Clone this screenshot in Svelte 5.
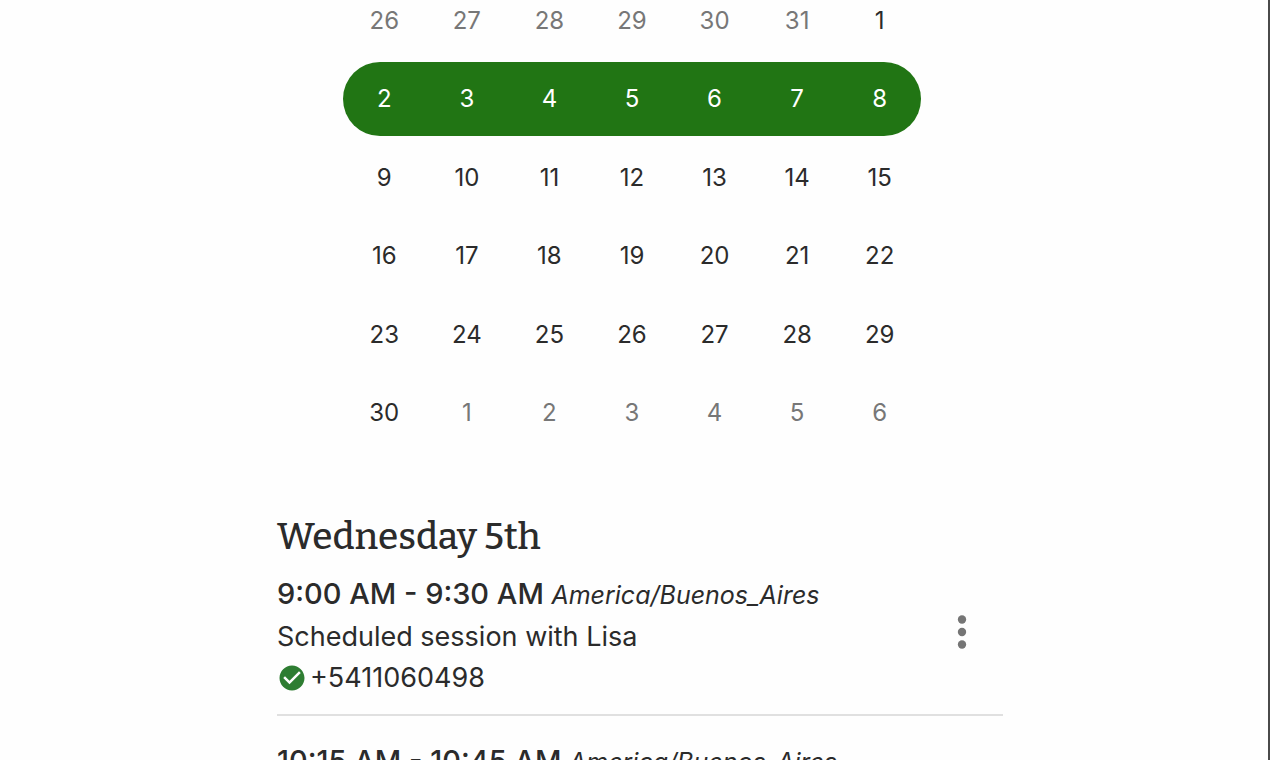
<script lang="ts">
  type Day = { day: number; outside?: boolean };

  type Session = {
    start: string;
    end: string;
    zone: string;
    title: string;
    phone: string;
  };

  const previous = [26, 27, 28, 29, 30, 31];
  const next = [1, 2, 3, 4, 5, 6];

  const days: Day[] = [
    ...previous.map((day) => ({ day, outside: true })),
    ...Array.from({ length: 30 }, (_, i) => ({ day: i + 1 })),
    ...next.map((day) => ({ day, outside: true }))
  ];

  const weeks: Day[][] = [];
  for (let i = 0; i < days.length; i += 7) {
    weeks.push(days.slice(i, i + 7));
  }

  const sessions: Session[] = [
    {
      start: '9:00 AM',
      end: '9:30 AM',
      zone: 'America/Buenos_Aires',
      title: 'Scheduled session with Lisa',
      phone: '+5411060498'
    },
    {
      start: '10:15 AM',
      end: '10:45 AM',
      zone: 'America/Buenos_Aires',
      title: 'Scheduled session with Lisa',
      phone: '+5411060498'
    }
  ];

  let selectedWeek = $state(1);
</script>

<main class="page">
  <div class="content">
    <div class="calendar">
      {#each weeks as week, i}
        <div class="week" class:selected={i === selectedWeek}>
          {#each week as { day, outside }}
            <button type="button" class="day" class:outside onclick={() => (selectedWeek = i)}>
              {day}
            </button>
          {/each}
        </div>
      {/each}
    </div>

    <h2>Wednesday 5th</h2>

    <ul class="sessions">
      {#each sessions as session}
        <li class="session">
          <div class="details">
            <p><strong>{session.start} - {session.end}</strong> <em>{session.zone}</em></p>
            <p>{session.title}</p>
            <p class="phone">
              <svg class="check" viewBox="0 0 24 24" aria-hidden="true">
                <path
                  d="M12 2C6.5 2 2 6.5 2 12s4.5 10 10 10 10-4.5 10-10S17.5 2 12 2zm-2 15-5-5 1.4-1.4 3.6 3.6 7.6-7.6L19 8l-9 9z"
                />
              </svg>
              {session.phone}
            </p>
          </div>
          <button type="button" class="menu" aria-label="Session options">
            <svg viewBox="0 0 24 24" aria-hidden="true">
              <circle cx="12" cy="6" r="2" />
              <circle cx="12" cy="12" r="2" />
              <circle cx="12" cy="18" r="2" />
            </svg>
          </button>
        </li>
      {/each}
    </ul>
  </div>
</main>

<style>
  :global(body) {
    margin: 0;
    background: #fefefe;
  }

  .page {
    box-sizing: border-box;
    height: 100vh;
    overflow: hidden;
    padding-left: 12px;
    border-right: 2px solid #4a4a4a;
    font-family: Inter, 'Liberation Sans', sans-serif;
    font-size: 27px;
    line-height: 41px;
    color: #2b2b2b;
  }

  .content {
    max-width: 726px;
    margin: 0 auto;
  }

  .calendar {
    display: flex;
    flex-direction: column;
    justify-content: space-between;
    max-width: 578px;
    height: 467px;
    margin: -17px 82px 0 66px;
  }

  .week {
    display: grid;
    grid-template-columns: repeat(7, 1fr);
    border-radius: 37px;
  }

  .day {
    height: 74px;
    padding: 0;
    border: 0;
    background: transparent;
    color: inherit;
    font-family: inherit;
    font-size: 24px;
    cursor: pointer;
  }

  .outside {
    color: #777;
  }

  .selected {
    background: #217514;
    color: #fff;
  }

  h2 {
    margin: 61px 0 0;
    font-family: Bitter, 'DejaVu Serif', serif;
    font-size: 37px;
    font-weight: 500;
    line-height: 52px;
  }

  .sessions {
    margin: 0;
    padding: 0;
    list-style: none;
  }

  .session {
    display: flex;
    align-items: center;
    justify-content: space-between;
    padding: 10px 12px 16px 0;
    border-bottom: 2px solid #e0e0e0;
  }

  .session + .session {
    padding-top: 24px;
  }

  p {
    margin: 0;
  }

  strong {
    font-size: 29px;
    font-weight: 500;
  }

  em {
    font-size: 25px;
  }

  .phone {
    display: flex;
    align-items: center;
    gap: 3px;
  }

  .check {
    width: 30px;
    height: 30px;
    fill: #2e7d32;
  }

  .menu {
    display: flex;
    margin-bottom: 8px;
    padding: 4px;
    border: 0;
    background: transparent;
    cursor: pointer;
  }

  .menu svg {
    width: 50px;
    height: 50px;
    fill: #757575;
  }
</style>
